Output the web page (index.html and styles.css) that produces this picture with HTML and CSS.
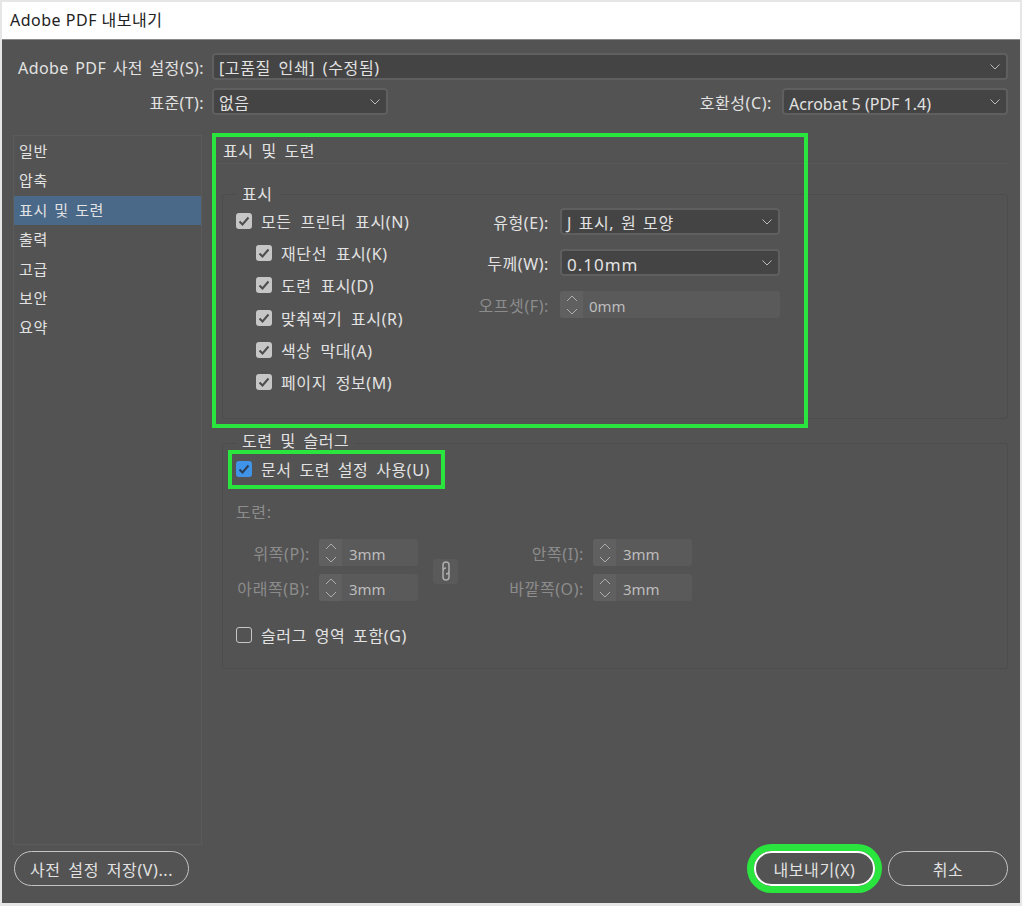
FILE: index.html
```html
<!DOCTYPE html>
<html lang="ko">
<head>
    <meta charset="UTF-8">
    <meta name="viewport" content="width=device-width, initial-scale=1.0">
    <title>Adobe PDF 내보내기</title>
    <link rel="stylesheet" href="styles.css">
</head>
<body>
    <div class="window">
        <div class="titlebar">Adobe PDF 내보내기</div>
        <div class="dialog">
            <div class="form-row">
                <label class="row-label">Adobe PDF 사전 설정(S):</label>
                <div class="select select-wide"><span>[고품질 인쇄] (수정됨)</span><svg class="chevron" viewBox="0 0 10 6"><path d="M.5.5L5 5 9.500.5"/></svg></div>
            </div>
            <div class="form-row form-row-second">
                <label class="row-label">표준(T):</label>
                <div class="select select-standard"><span>없음</span><svg class="chevron" viewBox="0 0 10 6"><path d="M.5.5L5 5 9.500.5"/></svg></div>
                <label class="compat-label">호환성(C):</label>
                <div class="select select-compat"><span class="latin-value">Acrobat 5 (PDF 1.4)</span><svg class="chevron" viewBox="0 0 10 6"><path d="M.5.5L5 5 9.500.5"/></svg></div>
            </div>

            <div class="main">
                <ul class="sidebar">
                    <li>일반</li>
                    <li>압축</li>
                    <li class="active">표시 및 도련</li>
                    <li>출력</li>
                    <li>고급</li>
                    <li>보안</li>
                    <li>요약</li>
                </ul>

                <div class="panel">
                    <div class="panel-title">표시 및 도련</div>

                    <section class="group group-marks">
                        <div class="legend">표시</div>
                        <div class="marks-body">
                            <div class="checks">
                                <div class="check-row"><span class="box"><svg viewBox="0 0 16 16"><path d="M3.5 8.5l3 3 6-7"/></svg></span>모든 프린터 표시(N)</div>
                                <div class="check-row sub"><span class="box"><svg viewBox="0 0 16 16"><path d="M3.5 8.5l3 3 6-7"/></svg></span>재단선 표시(K)</div>
                                <div class="check-row sub"><span class="box"><svg viewBox="0 0 16 16"><path d="M3.5 8.5l3 3 6-7"/></svg></span>도련 표시(D)</div>
                                <div class="check-row sub"><span class="box"><svg viewBox="0 0 16 16"><path d="M3.5 8.5l3 3 6-7"/></svg></span>맞춰찍기 표시(R)</div>
                                <div class="check-row sub"><span class="box"><svg viewBox="0 0 16 16"><path d="M3.5 8.5l3 3 6-7"/></svg></span>색상 막대(A)</div>
                                <div class="check-row sub"><span class="box"><svg viewBox="0 0 16 16"><path d="M3.5 8.5l3 3 6-7"/></svg></span>페이지 정보(M)</div>
                            </div>
                            <div class="fields">
                                <div class="field">
                                    <label class="field-label">유형(E):</label>
                                    <div class="select select-field"><span class="type-value">J 표시, 원 모양</span><svg class="chevron" viewBox="0 0 10 6"><path d="M.5.5L5 5 9.500.5"/></svg></div>
                                </div>
                                <div class="field">
                                    <label class="field-label">두께(W):</label>
                                    <div class="select select-field"><span class="latin-value thickness">0.10mm</span><svg class="chevron" viewBox="0 0 10 6"><path d="M.5.5L5 5 9.500.5"/></svg></div>
                                </div>
                                <div class="field disabled">
                                    <label class="field-label">오프셋(F):</label>
                                    <div class="spin spin-field">
                                        <span class="stepper"><svg viewBox="0 0 12 22"><path d="M1 7l5-5 5 5M1 15l5 5 5-5"/></svg></span>
                                        <span class="spin-value">0mm</span>
                                    </div>
                                </div>
                            </div>
                        </div>
                    </section>

                    <section class="group group-bleed">
                        <div class="legend">도련 및 슬러그</div>
                        <div class="check-row"><span class="box box-blue"><svg viewBox="0 0 16 16"><path d="M3.5 8.5l3 3 6-7"/></svg></span>문서 도련 설정 사용(U)</div>
                        <div class="bleed-label">도련:</div>
                        <div class="bleed-grid">
                            <div class="bleed-col">
                                <div class="bleed-field">
                                    <label class="bleed-name">위쪽(P):</label>
                                    <div class="spin"><span class="stepper"><svg viewBox="0 0 12 22"><path d="M1 7l5-5 5 5M1 15l5 5 5-5"/></svg></span><span class="spin-value">3mm</span></div>
                                </div>
                                <div class="bleed-field">
                                    <label class="bleed-name">아래쪽(B):</label>
                                    <div class="spin"><span class="stepper"><svg viewBox="0 0 12 22"><path d="M1 7l5-5 5 5M1 15l5 5 5-5"/></svg></span><span class="spin-value">3mm</span></div>
                                </div>
                            </div>
                            <div class="link-btn"><svg viewBox="0 0 12 22"><path d="M3 10V5a3 3 0 0 1 6 0v6a3 3 0 0 1-3 3M9 12v5a3 3 0 0 1-6 0v-6a3 3 0 0 1 3-3"/></svg></div>
                            <div class="bleed-col">
                                <div class="bleed-field">
                                    <label class="bleed-name bleed-name-right">안쪽(I):</label>
                                    <div class="spin"><span class="stepper"><svg viewBox="0 0 12 22"><path d="M1 7l5-5 5 5M1 15l5 5 5-5"/></svg></span><span class="spin-value">3mm</span></div>
                                </div>
                                <div class="bleed-field">
                                    <label class="bleed-name bleed-name-right">바깥쪽(O):</label>
                                    <div class="spin"><span class="stepper"><svg viewBox="0 0 12 22"><path d="M1 7l5-5 5 5M1 15l5 5 5-5"/></svg></span><span class="spin-value">3mm</span></div>
                                </div>
                            </div>
                        </div>
                        <div class="check-row slug-row"><span class="box box-empty"></span>슬러그 영역 포함(G)</div>
                    </section>
                </div>
            </div>

            <div class="footer">
                <button class="btn btn-save">사전 설정 저장(V)...</button>
                <button class="btn btn-export">내보내기(X)</button>
                <button class="btn btn-cancel">취소</button>
            </div>
        </div>
    </div>

    <!-- green callouts drawn on top of the dialog -->
    <div class="callout callout-marks"></div>
    <div class="callout callout-bleed"></div>
</body>
</html>
```

FILE: styles.css
```css
* {
    box-sizing: border-box;
}
html, body {
    height: 100%;
}
body {
    margin: 0;
    padding: 2px 2px 3px 2px;
    background-color: #e6e6e6;
    font-family: "Noto Sans", "Noto Sans CJK KR", sans-serif;
    font-size: 16px;
    letter-spacing: 0.6px;
    word-spacing: 3px;
    color: #e2e2e2;
    position: relative;
    overflow: hidden;
}
.window {
    height: 901px;
    display: flex;
    flex-direction: column;
}
.titlebar {
    flex: none;
    height: 38px;
    padding: 2px 0 0 8px;
    line-height: 33px;
    background-color: #fff;
    border-bottom: 1px solid #8a8a8a;
    color: #222;
    letter-spacing: 0.5px;
    word-spacing: 0;
}
.dialog {
    flex: 1;
    display: flex;
    flex-direction: column;
    padding: 13px 12px 0 11px;
    background-color: #535353;
}

/* top rows */
.form-row {
    flex: none;
    display: flex;
    align-items: center;
    height: 27px;
}
.form-row-second {
    margin-top: 8px;
}
.row-label {
    width: 191px;
    margin-right: 8px;
    text-align: right;
    letter-spacing: 0.4px;
    word-spacing: 2px;
    white-space: nowrap;
}
.compat-label {
    margin-left: auto;
    margin-right: 10px;
}
.select {
    display: flex;
    align-items: center;
    justify-content: space-between;
    height: 27px;
    padding: 0 5px;
    background-color: #444;
    border: 2px solid #5f5f5f;
    border-radius: 4px;
}
.select-wide {
    flex: 1;
}
.select-standard {
    width: 176px;
}
.select-compat {
    width: 226px;
}
.select-field {
    width: 220px;
}
.latin-value {
    position: relative;
    top: 2px;
    letter-spacing: 0;
    word-spacing: 0;
}
.type-value {
    word-spacing: 2px;
}
.thickness {
    font-size: 17px;
    letter-spacing: 1px;
}
.chevron {
    width: 10px;
    height: 6px;
    margin-right: 1px;
    fill: none;
    stroke: #bcbcbc;
    stroke-width: 1;
}

/* sidebar + panel */
.main {
    flex: none;
    display: flex;
    gap: 10px;
    height: 710px;
    margin-top: 20px;
}
.sidebar {
    width: 189px;
    margin: 0;
    padding: 1px 0 0 0;
    list-style-type: none;
    border: 1px solid #5b5b5b;
    font-size: 15px;
    word-spacing: 2px;
}
.sidebar li {
    height: 29.4px;
    line-height: 28px;
    padding-left: 5px;
}
.sidebar li.active {
    background-color: #4a6888;
}
.panel {
    flex: 1;
}
.panel-title {
    height: 29px;
    padding-left: 11px;
    line-height: 33px;
    border-bottom: 1px solid #5a5a5a;
}

/* field groups */
.group {
    margin-left: 10px;
    padding-left: 13px;
    border: 1px solid #4c4c4c;
    border-radius: 3px;
}
.group-marks {
    height: 225px;
    margin-top: 30px;
}
.group-bleed {
    height: 226px;
    margin-top: 24px;
}
.legend {
    width: fit-content;
    height: 20px;
    margin: -11px 0 0 0;
    padding: 0 6px;
    line-height: 20px;
    background-color: #535353;
}
.group-bleed .legend {
    margin: -13px 0 2px 0;
}
.marks-body {
    display: flex;
}
.checks {
    width: 234px;
    margin-top: 1px;
    word-spacing: 4px;
}
.checks .check-row {
    height: 32.2px;
}
.check-row {
    display: flex;
    align-items: center;
    gap: 9px;
    height: 32px;
}
.check-row.sub {
    padding-left: 20px;
}
.box {
    flex: none;
    width: 16px;
    height: 16px;
    background-color: #c6c6c6;
    border-radius: 3px;
}
.box svg {
    display: block;
    fill: none;
    stroke: #4d4d4d;
    stroke-width: 2;
}
.box-blue {
    background-color: #3f94ea;
}
.box-blue svg {
    stroke: #2c3e55;
}
.box-empty {
    background-color: transparent;
    border: 1px solid #c6c6c6;
}
.fields {
    display: flex;
    flex-direction: column;
    gap: 14px;
    margin-top: 4px;
}
.field {
    display: flex;
    align-items: center;
    gap: 11px;
    height: 27px;
}
.field-label {
    width: 79px;
    text-align: right;
    white-space: nowrap;
}
.disabled {
    margin-top: 1px;
}
.disabled .field-label {
    color: #8c8c8c;
}

/* number inputs, always greyed out in this dialog */
.spin {
    display: flex;
    align-items: center;
    width: 99px;
    height: 27px;
    background-color: #5a5a5a;
    border-radius: 3px;
    color: #bdbdbd;
    font-size: 15px;
    letter-spacing: 0;
}
.spin-field {
    width: 220px;
}
.stepper {
    display: flex;
    align-items: center;
    justify-content: center;
    width: 23px;
    height: 100%;
    background-color: #606060;
    border-radius: 3px 0 0 3px;
}
.stepper svg {
    width: 12px;
    height: 22px;
    fill: none;
    stroke: #aeaeae;
    stroke-width: 1;
}
.spin-value {
    padding: 3px 0 0 7px;
}
.spin-field .spin-value {
    padding-left: 6px;
}
.bleed-label {
    height: 20px;
    margin-top: 17px;
    line-height: 20px;
    color: #8c8c8c;
}
.bleed-grid {
    display: flex;
    align-items: center;
    margin-top: 17px;
}
.bleed-col {
    display: flex;
    flex-direction: column;
    gap: 8px;
}
.bleed-field {
    display: flex;
    align-items: center;
    gap: 9px;
}
.bleed-name {
    width: 74px;
    color: #8c8c8c;
    text-align: right;
    white-space: nowrap;
}
.bleed-name-right {
    width: 126px;
}
.link-btn {
    display: flex;
    align-items: center;
    justify-content: center;
    width: 25px;
    height: 25px;
    margin: 2px 0 0 15px;
    background-color: #5a5a5a;
    border-radius: 3px;
}
.link-btn svg {
    width: 12px;
    height: 22px;
    fill: none;
    stroke: #aeaeae;
    stroke-width: 1.500;
}
.slug-row {
    margin-top: 18px;
}

/* bottom buttons */
.footer {
    flex: none;
    display: flex;
    margin-top: 6px;
}
.btn {
    height: 35px;
    padding: 0;
    background-color: transparent;
    border: 1px solid #c4c4c4;
    border-radius: 18px;
    color: #e2e2e2;
    font-family: inherit;
    font-size: 16px;
    letter-spacing: 0.6px;
    word-spacing: 3px;
}
.btn-save {
    width: 175px;
    margin-left: 1px;
}
.btn-export {
    width: 121px;
    margin-left: auto;
    border: 2px solid #fff;
    box-shadow: 0 0 0 7px #2be53f;
}
.btn-cancel {
    width: 120px;
    margin-left: 13px;
}

.callout {
    position: absolute;
    border: 4px solid #2be53f;
}
.callout-marks {
    left: 212px;
    top: 133px;
    width: 596px;
    height: 295px;
}
.callout-bleed {
    left: 228px;
    top: 450px;
    width: 217px;
    height: 39px;
}
```
